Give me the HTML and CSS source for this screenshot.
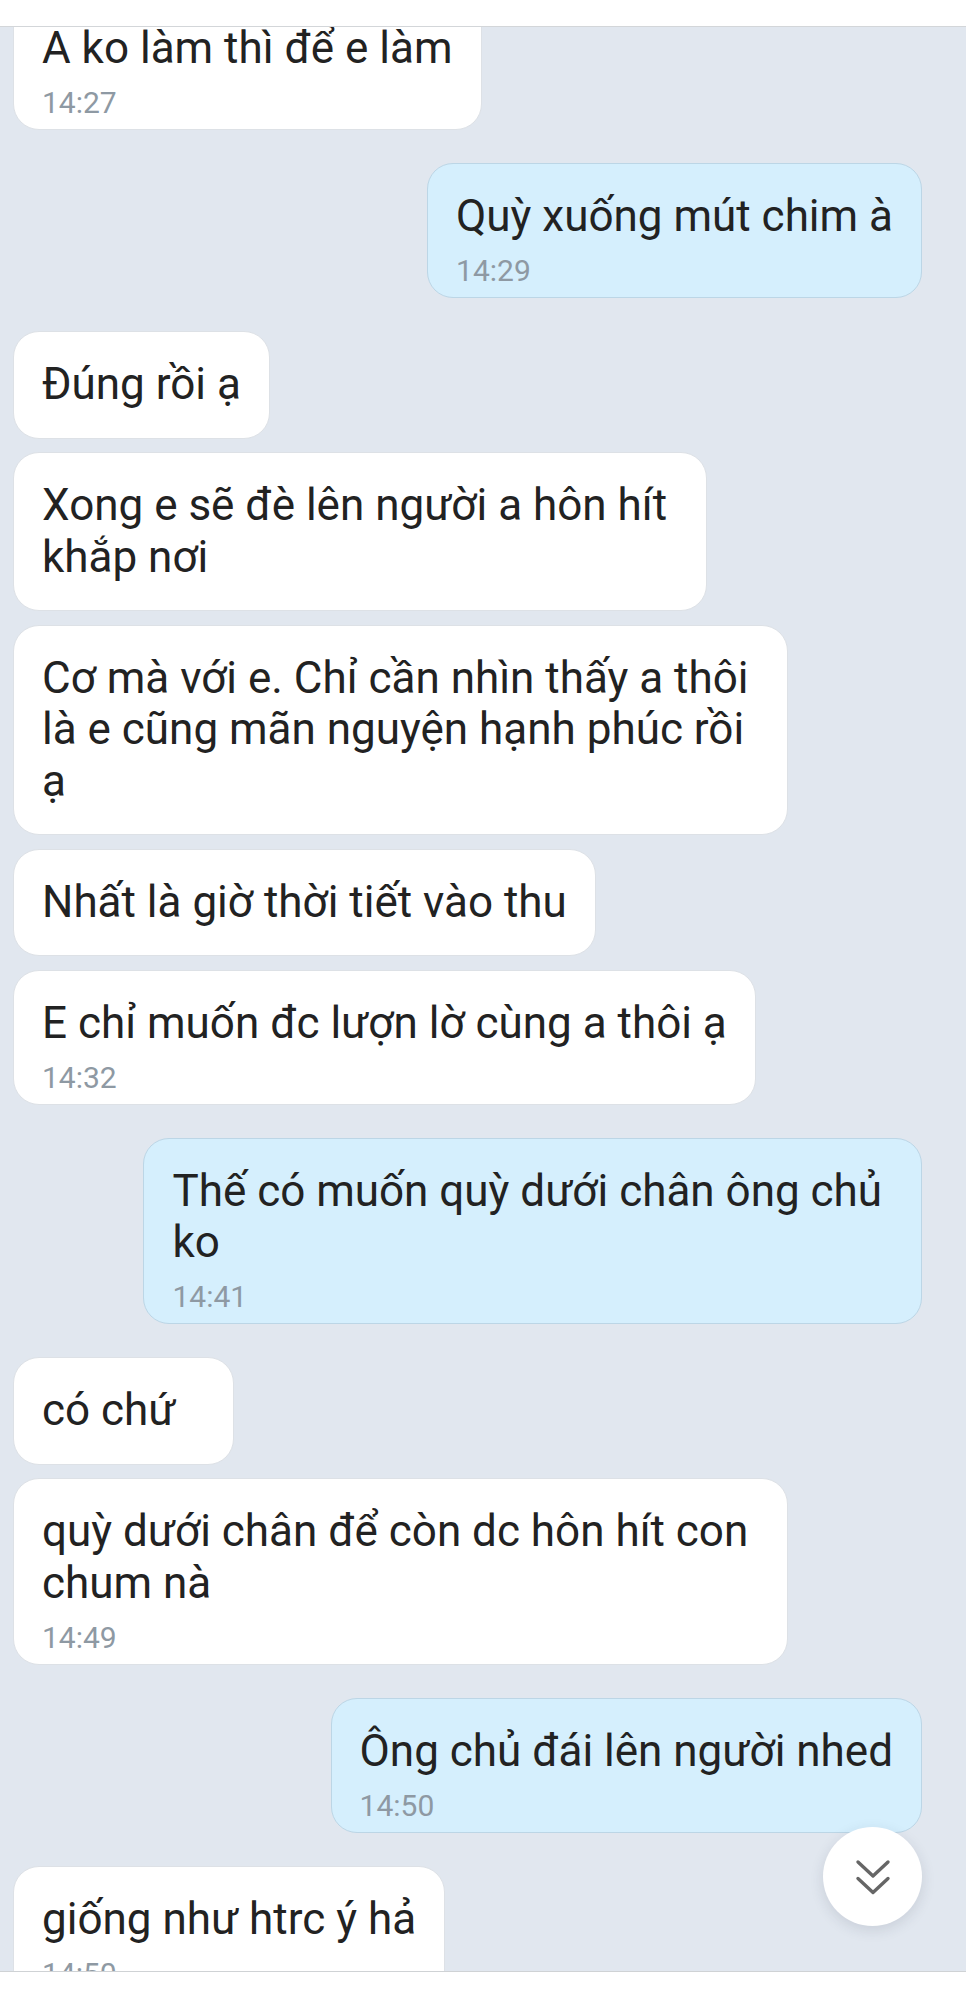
FILE: index.html
```html
<!DOCTYPE html>
<html lang="vi">
<head>
<meta charset="utf-8">
<title>Chat</title>
<link rel="stylesheet" href="styles.css">
</head>
<body>
<div class="screen">
  <header class="topbar"></header>
  <main class="chat">
    <div class="messages">
      <div class="msg in timed">
        <div class="text">A ko làm thì để e làm</div>
        <div class="time">14:27</div>
      </div>
      <div class="msg out timed">
        <div class="text">Quỳ xuống mút chim à</div>
        <div class="time">14:29</div>
      </div>
      <div class="msg in">
        <div class="text">Đúng rồi ạ</div>
      </div>
      <div class="msg in">
        <div class="text">Xong e sẽ đè lên người a hôn hít&nbsp;<br>khắp nơi</div>
      </div>
      <div class="msg in">
        <div class="text">Cơ mà với e. Chỉ cần nhìn thấy a thôi&nbsp;<br>là e cũng mãn nguyện hạnh phúc rồi<br>ạ</div>
      </div>
      <div class="msg in">
        <div class="text">Nhất là giờ thời tiết vào thu</div>
      </div>
      <div class="msg in timed">
        <div class="text">E chỉ muốn đc lượn lờ cùng a thôi ạ</div>
        <div class="time">14:32</div>
      </div>
      <div class="msg out timed">
        <div class="text">Thế có muốn quỳ dưới chân ông chủ&nbsp;<br>ko</div>
        <div class="time">14:41</div>
      </div>
      <div class="msg in">
        <div class="text">có chứ</div>
      </div>
      <div class="msg in timed">
        <div class="text">quỳ dưới chân để còn dc hôn hít con&nbsp;<br>chum nà</div>
        <div class="time">14:49</div>
      </div>
      <div class="msg out timed">
        <div class="text">Ông chủ đái lên người nhed</div>
        <div class="time">14:50</div>
      </div>
      <div class="msg in timed">
        <div class="text">giống như htrc ý hả</div>
        <div class="time">14:50</div>
      </div>
    </div>
    <button class="scroll-down" type="button" aria-label="Cuộn xuống">
      <svg width="40" height="40" viewBox="0 0 40 40" fill="none" stroke="#666" stroke-width="3.4" stroke-linecap="round" stroke-linejoin="round">
        <polyline points="5,5 20,19 35,5"/>
        <polyline points="5,21.5 20,35.5 35,21.5"/>
      </svg>
    </button>
  </main>
  <footer class="bottombar"></footer>
</div>
</body>
</html>
```

FILE: styles.css
```css
html, body {
  margin: 0;
  padding: 0;
}

body {
  width: 966px;
  height: 2003px;
  overflow: hidden;
  background: #e1e7ef;
  font-family: Roboto, "Noto Sans", sans-serif;
  color: #222222;
}

.screen {
  height: 2003px;
  display: flex;
  flex-direction: column;
}

.topbar {
  flex: none;
  height: 26px;
  background: #ffffff;
  border-bottom: 1px solid #d3d6d9;
}

.chat {
  flex: 1;
  position: relative;
  overflow: hidden;
  background: #e1e7ef;
}

.messages {
  display: flex;
  flex-direction: column;
  padding: 0 44px 0 13px;
  margin-top: -32px;
}

.msg {
  box-sizing: border-box;
  min-width: 221px;
  border: 1px solid #dde1e6;
  border-radius: 26px;
  padding: 27px 28px;
  background: #ffffff;
}

.msg.timed {
  padding-bottom: 9px;
}

.msg.in {
  align-self: flex-start;
}

.msg.out {
  align-self: flex-end;
  background: #d5effd;
  border-color: #bcd6e6;
}

.msg + .msg {
  margin-top: 13.5px;
}

.msg.in + .msg.out,
.msg.out + .msg.in {
  margin-top: 33px;
}

.text {
  font-size: 44px;
  line-height: 51.5px;
  white-space: nowrap;
  color: #222222;
}

.time {
  font-size: 30px;
  line-height: 35px;
  margin-top: 10.5px;
  color: #8e99a3;
}

.scroll-down {
  position: absolute;
  right: 44px;
  bottom: 45px;
  width: 99px;
  height: 99px;
  border: none;
  border-radius: 50%;
  background: #ffffff;
  box-shadow: 0 4px 14px rgba(40, 50, 70, 0.13);
  display: flex;
  align-items: center;
  justify-content: center;
  padding: 0;
}

.bottombar {
  flex: none;
  height: 31px;
  background: #ffffff;
  border-top: 1px solid #cfd2d5;
}
```
